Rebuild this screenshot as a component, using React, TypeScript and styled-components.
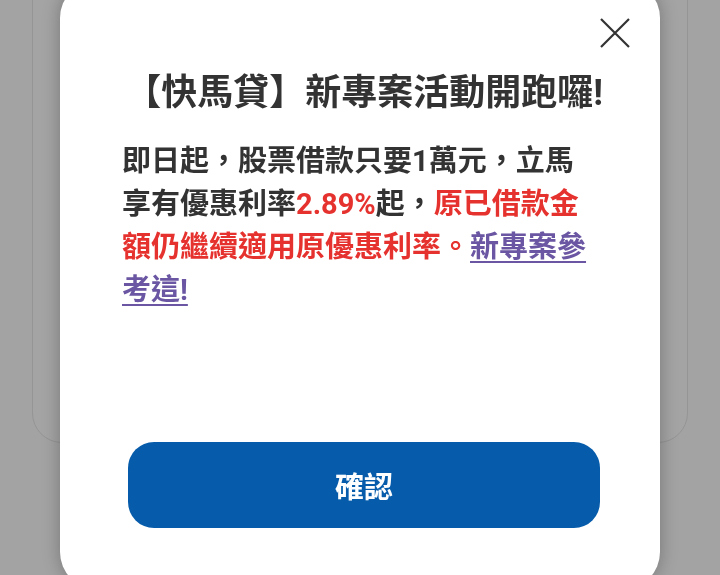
import styled, { createGlobalStyle } from "styled-components";

const GlobalStyle = createGlobalStyle`
  html, body {
    margin: 0;
    padding: 0;
    height: 100%;
    overflow: hidden;
  }
  body {
    background: #a3a3a3;
    font-family: Roboto, "Noto Sans CJK TC", sans-serif;
  }
`;

const Page = styled.div`
  width: 720px;
  height: 575px;
  padding: 0 32px;
  box-sizing: border-box;
`;

const BackCard = styled.div`
  margin-top: -40px;
  height: 483px;
  border: 1px solid #959595;
  border-radius: 30px;
  background: #a4a4a4;
  box-sizing: border-box;
`;

const Overlay = styled.div`
  position: fixed;
  inset: 0;
`;

const Modal = styled.div`
  position: absolute;
  left: 60px;
  top: -20px;
  width: 600px;
  height: 610px;
  background: #fff;
  border-radius: 38px;
  box-shadow: 0 0 18px rgba(0, 0, 0, 0.28);
  display: flex;
  flex-direction: column;
  padding-top: 91px;
  box-sizing: border-box;
`;

const CloseButton = styled.button`
  position: absolute;
  top: 38px;
  right: 30px;
  width: 30px;
  height: 30px;
  padding: 0;
  border: 0;
  background: none;
  display: flex;
`;

const Title = styled.h2`
  margin: 0 0 0 8px;
  text-align: center;
  font-size: 36px;
  line-height: 44px;
  font-weight: 700;
  color: #333;
`;

const Body = styled.p`
  margin: 25px 0 0;
  padding: 0 66px 0 62px;
  font-size: 29px;
  line-height: 43px;
  font-weight: 700;
  color: #333;
`;

const Red = styled.span`
  color: #e6322e;
`;

const Link = styled.a`
  color: #6a56a2;
  text-decoration: underline;
  text-underline-offset: 4px;
  text-decoration-thickness: 2px;
`;

const Actions = styled.div`
  margin-top: 130px;
  padding: 0 60px 0 68px;
`;

const ConfirmButton = styled.button`
  width: 100%;
  height: 86px;
  border: 0;
  border-radius: 26px;
  background: #065cab;
  color: #fff;
  font-family: Roboto, "Noto Sans CJK TC", sans-serif;
  font-size: 29px;
  font-weight: 700;
`;

export default function App() {
  return (
    <>
      <GlobalStyle />
      <Page>
        <BackCard />
      </Page>
      <Overlay>
        <Modal>
          <CloseButton aria-label="關閉">
            <svg width="30" height="30" viewBox="0 0 30 30">
              <path d="M1 1 L29 29 M29 1 L1 29" stroke="#333" strokeWidth="2.2" fill="none" />
            </svg>
          </CloseButton>
          <Title>【快馬貸】新專案活動開跑囉!</Title>
          <Body>
            即日起，股票借款只要1萬元，立馬享有優惠利率<Red>2.89%</Red>起，
            <Red>原已借款金額仍繼續適用原優惠利率。</Red>
            <Link href="#">新專案參考這!</Link>
          </Body>
          <Actions>
            <ConfirmButton>確認</ConfirmButton>
          </Actions>
        </Modal>
      </Overlay>
    </>
  );
}
